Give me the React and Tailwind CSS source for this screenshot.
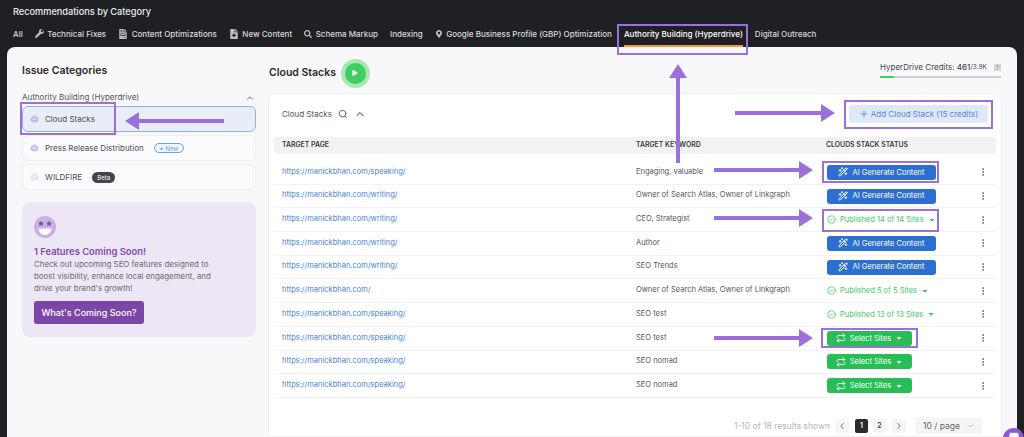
import React from 'react';
import { Search, ChevronUp, ChevronDown, ChevronLeft, ChevronRight, Plus, WandSparkles, Repeat, CircleCheck, EllipsisVertical, MessageSquare } from 'lucide-react';
import { FaWrench, FaMapMarkerAlt, FaSearch, FaCaretDown, FaFileMedical, FaPlay, FaFileInvoice } from 'react-icons/fa';

const rows = [
  { url: 'https://manickbhan.com/speaking/', keyword: 'Engaging, valuable', type: 'ai' },
  { url: 'https://manickbhan.com/writing/', keyword: 'Owner of Search Atlas, Owner of Linkgraph', type: 'ai' },
  { url: 'https://manickbhan.com/writing/', keyword: 'CEO, Strategist', type: 'pub', label: 'Published 14 of 14 Sites' },
  { url: 'https://manickbhan.com/writing/', keyword: 'Author', type: 'ai' },
  { url: 'https://manickbhan.com/writing/', keyword: 'SEO Trends', type: 'ai' },
  { url: 'https://manickbhan.com/', keyword: 'Owner of Search Atlas, Owner of Linkgraph', type: 'pub', label: 'Published 5 of 5 Sites' },
  { url: 'https://manickbhan.com/speaking/', keyword: 'SEO test', type: 'pub', label: 'Published 13 of 13 Sites' },
  { url: 'https://manickbhan.com/speaking/', keyword: 'SEO test', type: 'sites' },
  { url: 'https://manickbhan.com/speaking/', keyword: 'SEO nomad', type: 'sites' },
  { url: 'https://manickbhan.com/speaking/', keyword: 'SEO nomad', type: 'sites' },
];

function CloudIcon({ color = '#a98ad6', faded }) {
  return (
    <svg width="9" height="10" viewBox="0 0 12 12" fill="none" className={faded ? 'opacity-40' : ''}>
      <circle cx="6" cy="6" r="5.2" fill={color} opacity="0.25" />
      <path d="M3.2 8.6a1.7 1.7 0 0 1 .1-3.4 2.8 2.8 0 0 1 5.4 0 1.7 1.7 0 0 1 .1 3.4z" stroke={color} strokeWidth="1" />
    </svg>
  );
}

function StarFace() {
  return (
    <svg width="22" height="22" viewBox="0 0 22 22">
      <circle cx="11" cy="11" r="11" fill="#c8b2e0" />
      <path d="M7 4.5l.9 2 2.1.2-1.6 1.4.5 2.1L7 9.1l-1.9 1.1.5-2.1L4 6.7l2.1-.2zM15 4.5l.9 2 2.1.2-1.6 1.4.5 2.1-1.9-1.1-1.9 1.1.5-2.1L12 6.7l2.1-.2z" fill="#7f4bab" />
      <path d="M4.5 12.5h13a6.5 6.5 0 0 1-13 0z" fill="#fff" />
    </svg>
  );
}

function Status({ row }) {
  if (row.type === 'ai') {
    return (
      <button className="flex h-[15px] w-[109px] items-center justify-center gap-[4px] rounded-[3px] bg-[#2d6fd0] text-[7.5px] text-white">
        <WandSparkles size={10} strokeWidth={2.4} />
        AI Generate Content
      </button>
    );
  }
  if (row.type === 'pub') {
    return (
      <div className="flex items-center gap-[4px] text-[7.5px] text-[#3cc765]">
        <CircleCheck size={9} />
        {row.label}
        <FaCaretDown size={8} />
      </div>
    );
  }
  return (
    <button className="flex h-[15px] w-[85px] items-center justify-center gap-[4px] rounded-[3px] bg-[#27bf55] text-[7.5px] text-white">
      <Repeat size={10} strokeWidth={2.4} />
      Select Sites
      <FaCaretDown size={8} />
    </button>
  );
}

function Tab({ icon, children, active }) {
  return (
    <div className={`flex h-[24px] items-center gap-[3.5px] border-b-2 pb-[1px] text-[8px] font-medium ${active ? 'border-[#f0a030] text-white' : 'border-transparent text-[#d9d9dc]'}`}>
      {icon && <span className="text-[#bdbdc2]">{icon}</span>}
      {children}
    </div>
  );
}

function SideItem({ icon, children, active, extra }) {
  return (
    <div className={`flex h-[26px] items-center gap-[6px] rounded-[6px] border px-[7px] text-[8px] text-[#4b4b50] ${active ? 'border-[#8fb0ea] bg-[#e9edf8]' : 'border-[#efeff2] bg-[#fbfbfd]'}`}>
      {icon}
      <span>{children}</span>
      {extra}
    </div>
  );
}

function Mark({ className }) {
  return <div className={`absolute border-2 border-[#9b70db] ${className}`} />;
}

export default function App() {
  return (
    <div className="relative h-[437px] w-[1024px] overflow-hidden bg-[#1f2024] font-['Inter',sans-serif]">
      <div className="px-[13px] pt-[6px] text-[9.2px] font-medium leading-[12px] text-[#ececee]">Recommendations by Category</div>
      <div className="flex h-[29px] items-start gap-[12px] pl-[13px] pt-[5px]">
        <Tab>All</Tab>
        <Tab icon={<FaWrench size={9} />}>Technical Fixes</Tab>
        <Tab icon={<FaFileInvoice size={10} />}>Content Optimizations</Tab>
        <Tab icon={<FaFileMedical size={10} />}>New Content</Tab>
        <Tab icon={<FaSearch size={8} />}>Schema Markup</Tab>
        <Tab>Indexing</Tab>
        <Tab icon={<FaMapMarkerAlt size={8} />}>Google Business Profile (GBP) Optimization</Tab>
        <Tab active>Authority Building (Hyperdrive)</Tab>
        <Tab>Digital Outreach</Tab>
      </div>

      <div className="ml-[7px] flex h-[390px] w-[1010px] rounded-t-[8px] bg-[#f8f8fa]">
        {/* left column */}
        <div className="ml-[15px] w-[234px] shrink-0 pt-[17px]">
          <h2 className="text-[10.5px] font-semibold leading-[13px] text-[#2a2a2e]">Issue Categories</h2>
          <div className="mt-[15px] flex items-center justify-between pr-[1px] text-[8px] leading-[11px] text-[#55555a]">
            Authority Building (Hyperdrive)
            <ChevronUp size={10} />
          </div>
          <div className="mt-[3px] flex flex-col gap-[3px]">
            <SideItem active icon={<CloudIcon />}>Cloud Stacks</SideItem>
            <SideItem
              icon={<CloudIcon />}
              extra={
                <span className="ml-[4px] flex h-[10px] w-[30px] items-center justify-center gap-[2px] rounded-full border border-[#6f9fe8] bg-[#f0f5fd] text-[6px] text-[#6f9fe8]">
                  ✦ New
                </span>
              }
            >
              Press Release Distribution
            </SideItem>
            <SideItem
              icon={<CloudIcon faded />}
              extra={<span className="ml-[4px] flex h-[11px] w-[23px] items-center justify-center rounded-full bg-[#44444a] text-[6px] text-white">Beta</span>}
            >
              WILDFIRE
            </SideItem>
          </div>
          <div className="mt-[12px] h-[135px] rounded-[8px] bg-[#ede6f4] pl-[12px] pt-[14px]">
            <StarFace />
            <div className="mt-[7px] text-[9.4px] font-semibold leading-[13px] text-[#7f4bab]">1 Features Coming Soon!</div>
            <p className="w-[186px] text-[7.9px] leading-[12px] text-[#6b6b72]">
              Check out upcoming SEO features designed to boost visibility, enhance local engagement, and drive your brand's growth!
            </p>
            <button className="mt-[7px] h-[23px] w-[110px] rounded-[3px] bg-[#7c45a8] text-[9px] font-medium text-white">What's Coming Soon?</button>
          </div>
        </div>

        {/* main column */}
        <div className="ml-[12px] w-[734px] shrink-0">
          <div className="flex h-[46px] items-center">
            <div className="flex items-center pt-[6px]">
              <h1 className="ml-[1px] text-[10.5px] font-semibold text-[#2a2a2e]">Cloud Stacks</h1>
              <div className="ml-[5px] flex h-[29px] w-[29px] items-center justify-center rounded-full bg-[#a9e6b8]">
                <div className="flex h-[21px] w-[21px] items-center justify-center rounded-full bg-[#3ecf60] text-white">
                  <FaPlay size={6} />
                </div>
              </div>
            </div>
            <div className="ml-auto w-[122px] pr-[1px]">
              <div className="flex items-center text-[8px] leading-[11px] text-[#44444a]">
                HyperDrive Credits:&nbsp;<span className="font-medium">461</span><span className="text-[6.5px]">/3.9K</span>
                <span className="ml-auto flex h-[7px] w-[7px] items-center justify-center bg-[#d5d5d8] text-[5px] text-[#888]">?</span>
              </div>
              <div className="mt-[3px] h-[2px] w-full bg-[#cfcfd2]">
                <div className="h-full w-[14px] bg-[#45d06f]" />
              </div>
            </div>
          </div>

          <div className="h-[344px] rounded-t-[6px] border border-[#f0f0f2] bg-white">
            <div className="flex h-[43px] items-center pb-[3px] pl-[13px] pr-[13px]">
              <span className="text-[8px] text-[#55555a]">Cloud Stacks</span>
              <Search size={10} className="ml-[6px] text-[#55555a]" />
              <ChevronUp size={12} className="ml-[6px] text-[#333]" />
              <button className="ml-auto flex h-[18px] w-[139px] items-center justify-center gap-[2px] rounded-[3px] bg-[#dfe8f7] text-[8px] text-[#5b85cf]">
                <Plus size={10} />
                Add Cloud Stack (15 credits)
              </button>
            </div>

            <div className="mx-[5px]">
              <div className="grid h-[17px] grid-cols-[354px_190px_1fr] items-center rounded-[3px] bg-[#f2f2f4] pl-[8px] text-[6.9px] font-semibold text-[#3a3a40]">
                <span>TARGET PAGE</span>
                <span>TARGET KEYWORD</span>
                <span>CLOUDS STACK STATUS</span>
              </div>
              <div className="mt-[7px]">
                {rows.map((row, i) => (
                  <div key={i} className="grid h-[23.7px] grid-cols-[354px_191px_1fr_18px] items-center border-b border-[#f2f2f4] pl-[8px] text-[7.5px]">
                    <span className="pb-[2px] text-[#4a7fd0]">{row.url}</span>
                    <span className="pb-[2px] text-[#55555a]">{row.keyword}</span>
                    <Status row={row} />
                    <EllipsisVertical size={10} className="text-[#55555a]" />
                  </div>
                ))}
              </div>
              <div className="mt-[20px] flex items-center justify-end pr-[14px] text-[8.5px]">
                <span className="mr-[5px] text-[#b5b5b8]">1-10 of 18 results shown</span>
                <span className="flex h-[14px] w-[14px] items-center justify-center rounded-[2px] bg-[#f5f5f6] text-[#555]"><ChevronLeft size={10} /></span>
                <span className="ml-[6px] flex h-[14px] w-[13px] items-center justify-center rounded-[2px] bg-[#2b2b30] text-[7px] font-semibold text-white">1</span>
                <span className="ml-[5px] flex h-[14px] w-[13px] items-center justify-center rounded-[2px] bg-[#f5f5f6] text-[7px] font-semibold text-[#444]">2</span>
                <span className="ml-[6px] flex h-[14px] w-[14px] items-center justify-center rounded-[2px] bg-[#f5f5f6] text-[#555]"><ChevronRight size={10} /></span>
                <span className="ml-[9px] flex h-[16px] w-[67px] items-center justify-center gap-[6px] rounded-[2px] bg-[#f5f5f6] text-[#666]">
                  10 / page
                  <ChevronDown size={8} className="text-[#aaa]" />
                </span>
              </div>
            </div>
          </div>
        </div>
      </div>

      {/* purple annotations on top of the screenshot */}
      <Mark className="left-[617px] top-[24px] h-[31px] w-[131px]" />
      <Mark className="left-[20px] top-[102px] h-[33px] w-[96px]" />
      <Mark className="left-[844px] top-[100px] h-[29px] w-[149px]" />
      <Mark className="left-[822px] top-[161px] h-[22px] w-[117px]" />
      <Mark className="left-[822px] top-[209px] h-[23px] w-[117px]" />
      <Mark className="left-[821px] top-[328px] h-[20px] w-[97px]" />
      <svg className="absolute left-0 top-0" width="1024" height="437" fill="#9b70db">
        <path d="M224 119v4h-85v7l-14-9 14-9v7z" />
        <path d="M676 163V78h-7l9-14 9 14h-7v85z" />
        <path d="M735 111v4h86v7l14-9-14-9v7z" />
        <path d="M714 168v4h85v7l14-9-14-9v7z" />
        <path d="M714 216v4h85v7l14-9-14-9v7z" />
        <path d="M714 336v4h85v7l14-9-14-9v7z" />
      </svg>

      <div className="absolute left-[1003px] top-[428px] flex h-[21px] w-[21px] items-start justify-center rounded-full bg-[#8a5ad6] pt-[4px] text-white">
        <MessageSquare size={10} fill="white" />
      </div>
    </div>
  );
}
